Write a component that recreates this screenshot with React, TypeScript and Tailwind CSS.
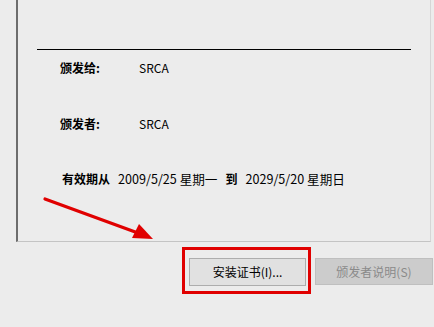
export default function App() {
  const font = { fontFamily: '"Noto Sans CJK SC", "Noto Sans", sans-serif' }

  return (
    <div
      className="relative w-[434px] h-[327px] overflow-hidden bg-[#ececec] text-[12px] text-black"
      style={font}
    >
      {/* certificate panel, top cut off */}
      <div className="ml-[16px] w-[415px] h-[242px] border-l-2 border-l-[#6d6d6d] border-r border-r-[#d6d6d6] border-b border-b-[#c4c4c4] pt-[49px]">
        <div className="ml-[19px] w-[374px] h-px bg-black" />

        <div className="mt-[8px] ml-[42px] flex h-[20px] items-center">
          <span className="w-[79px] font-bold">颁发给:</span>
          <span>SRCA</span>
        </div>

        <div className="mt-[36px] ml-[42px] flex h-[20px] items-center">
          <span className="w-[79px] font-bold">颁发者:</span>
          <span>SRCA</span>
        </div>

        <div className="mt-[35px] ml-[44px] flex h-[20px] items-center">
          <span className="font-bold">有效期从</span>
          <span className="ml-[8px] text-[12.6px]">2009/5/25 星期一</span>
          <span className="ml-[8px] font-bold">到</span>
          <span className="ml-[8px] text-[12.6px]">2029/5/20 星期日</span>
        </div>
      </div>

      {/* buttons */}
      <div className="mt-[5px] ml-[182px] flex items-start">
        <div className="border-[3px] border-[#e00000] pl-[4px] pr-[2px] pt-[8px] pb-[5px]">
          <button className="w-[117px] h-[28px] bg-[#e1e1e1] border border-[#adadad] flex items-center justify-center">
            安装证书(I)...
          </button>
        </div>
        <button
          disabled
          className="ml-[4px] mt-[11px] w-[118px] h-[27px] bg-[#cccccc] border border-[#bfbfbf] text-[#8a8a8a] flex items-center justify-center"
        >
          颁发者说明(S)
        </button>
      </div>

      {/* red annotation arrow */}
      <svg className="absolute left-0 top-0" width="434" height="327" viewBox="0 0 434 327">
        <line x1="45" y1="199" x2="138" y2="233" stroke="#e00000" strokeWidth="3.2" strokeLinecap="round" />
        <polygon points="153,239 132,238 139,224" fill="#e00000" />
      </svg>
    </div>
  )
}
